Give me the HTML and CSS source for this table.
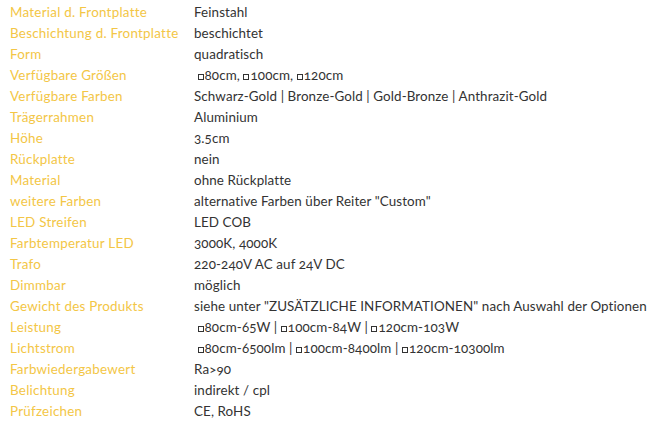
FILE: index.html
```html
<!DOCTYPE html>
<html lang="de">
<head>
<meta charset="utf-8">
<link rel="stylesheet" href="styles.css">
</head>
<body>
<dl class="specs">
  <dt>Material d. Frontplatte</dt><dd>Feinstahl</dd>
  <dt>Beschichtung d. Frontplatte</dt><dd>beschichtet</dd>
  <dt>Form</dt><dd>quadratisch</dd>
  <dt>Verfügbare Größen</dt><dd>&nbsp;<span class="sq"></span>80cm, <span class="sq"></span>100cm, <span class="sq"></span>120cm</dd>
  <dt>Verfügbare Farben</dt><dd>Schwarz-Gold | Bronze-Gold | Gold-Bronze | Anthrazit-Gold</dd>
  <dt>Trägerrahmen</dt><dd>Aluminium</dd>
  <dt>Höhe</dt><dd>3.5cm</dd>
  <dt>Rückplatte</dt><dd>nein</dd>
  <dt>Material</dt><dd>ohne Rückplatte</dd>
  <dt>weitere Farben</dt><dd>alternative Farben über Reiter "Custom"</dd>
  <dt>LED Streifen</dt><dd>LED COB</dd>
  <dt>Farbtemperatur LED</dt><dd>3000K, 4000K</dd>
  <dt>Trafo</dt><dd>220-240V AC auf 24V DC</dd>
  <dt>Dimmbar</dt><dd>möglich</dd>
  <dt>Gewicht des Produkts</dt><dd>siehe unter "ZUSÄTZLICHE INFORMATIONEN" nach Auswahl der Optionen</dd>
  <dt>Leistung</dt><dd>&nbsp;<span class="sq"></span>80cm-65W | <span class="sq"></span>100cm-84W | <span class="sq"></span>120cm-103W</dd>
  <dt>Lichtstrom</dt><dd>&nbsp;<span class="sq"></span>80cm-6500lm | <span class="sq"></span>100cm-8400lm | <span class="sq"></span>120cm-10300lm</dd>
  <dt>Farbwiedergabewert</dt><dd>Ra&gt;90</dd>
  <dt>Belichtung</dt><dd>indirekt / cpl</dd>
  <dt>Prüfzeichen</dt><dd>CE, RoHS</dd>
</dl>
</body>
</html>
```
FILE: styles.css
```css
html, body {
  margin: 0;
  padding: 0;
  background: #ffffff;
}
.specs {
  margin: 0;
  padding: 2px 0 0 10px;
  display: grid;
  grid-template-columns: 184px auto;
  grid-auto-rows: 21px;
  font-family: "Lato", "Open Sans", sans-serif;
  font-size: 13.4px;
  letter-spacing: 0.1px;
  line-height: 21px;
  font-variant-numeric: oldstyle-nums;
}
.specs dt {
  color: #f3c646;
  white-space: nowrap;
  letter-spacing: 0.25px;
}
.specs dd {
  margin: 0;
  color: #333333;
  white-space: nowrap;
}
.sq {
  display: inline-block;
  box-sizing: border-box;
  width: 6px;
  height: 6px;
  border: 1px solid #333333;
  margin-right: 1px;
  vertical-align: baseline;
}
```
